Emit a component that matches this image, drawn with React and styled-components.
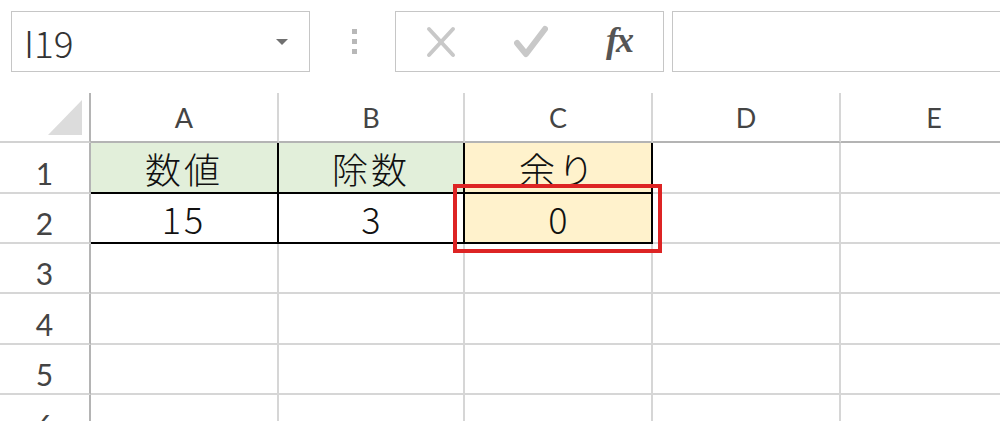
import React from 'react'
import styled, { createGlobalStyle } from 'styled-components'

const GlobalStyle = createGlobalStyle`
  html, body {
    margin: 0;
    padding: 0;
    background: #fff;
    overflow: hidden;
  }
  * {
    box-sizing: border-box;
  }
`

const gridLine = '#d6d6d6'
const headerLine = '#b4b4b4'
const cellFont = `"Noto Sans CJK JP", "Noto Sans", sans-serif`
const headFont = `Lato, "Open Sans", sans-serif`

const Page = styled.div`
  width: 1000px;
  height: 421px;
  overflow: hidden;
`

const Toolbar = styled.div`
  display: flex;
  align-items: center;
  padding: 11px 0 0 11px;
  height: 72px;
`

const NameBox = styled.div`
  display: flex;
  align-items: center;
  width: 299px;
  height: 61px;
  border: 1px solid #c6c6c6;
  padding: 0 21px 0 12px;
  font-family: ${cellFont};
  font-weight: 300;
  font-size: 37px;
  color: #333;
`

const DropArrow = styled.span`
  margin-left: auto;
  width: 0;
  height: 0;
  border-left: 6px solid transparent;
  border-right: 6px solid transparent;
  border-top: 6px solid #707070;
`

const Grip = styled.div`
  display: flex;
  flex-direction: column;
  gap: 5px;
  margin: 0 38px 0 42px;
  span {
    width: 5px;
    height: 5px;
    background: #b8b8b8;
  }
`

const FormulaButtons = styled.div`
  display: flex;
  align-items: center;
  width: 269px;
  height: 61px;
  border: 1px solid #c6c6c6;
  padding-left: 30px;
`

const IconSlot = styled.div`
  display: flex;
  align-items: center;
  justify-content: center;
  width: ${p => p.w}px;
  margin-right: ${p => p.gap}px;
`

const Fx = styled.span`
  font-family: "Liberation Serif", "DejaVu Serif", serif;
  font-style: italic;
  font-weight: bold;
  font-size: 36px;
  color: #555;
  letter-spacing: -2px;
  line-height: 1;
  margin-top: -4px;
`

const FormulaInput = styled.div`
  flex: 1;
  height: 61px;
  margin-left: 8px;
  border: 1px solid #c6c6c6;
  border-right: none;
`

const Sheet = styled.div`
  position: relative;
  margin-top: 21px;
  display: grid;
  grid-template-columns: 91px 188px 186px 188px 188px 188px;
  grid-template-rows: 50px 51px 50px 50px 51px 50px 51px;
`

const Corner = styled.div`
  display: flex;
  align-items: flex-end;
  justify-content: flex-end;
  padding: 0 7px 6px 0;
  border-right: 2px solid ${headerLine};
  border-bottom: 2px solid #d2d2d2;
  span {
    width: 34px;
    height: 35px;
    background: #dcdcdc;
    clip-path: polygon(100% 0, 100% 100%, 0 100%);
  }
`

const ColHeader = styled.div`
  display: flex;
  align-items: flex-end;
  justify-content: center;
  padding-bottom: 7px;
  border-right: 2px solid ${gridLine};
  border-bottom: 2px solid ${headerLine};
  font-family: ${headFont};
  font-size: 27px;
  color: #444;
`

const RowHeader = styled.div`
  display: flex;
  align-items: flex-end;
  justify-content: center;
  padding-bottom: 1px;
  border-right: 2px solid ${headerLine};
  border-bottom: 2px solid ${gridLine};
  font-family: ${headFont};
  font-size: 30px;
  color: #444;
`

const Cell = styled.div`
  display: flex;
  align-items: flex-end;
  justify-content: center;
  padding-bottom: 2px;
  background: ${p => p.fill || '#fff'};
  border-right: 2px solid ${p => (p.boxed ? '#000' : gridLine)};
  border-bottom: 2px solid ${p => (p.boxed ? '#000' : gridLine)};
  font-family: ${cellFont};
  font-weight: 300;
  font-size: 36px;
  line-height: 44px;
  letter-spacing: ${p => (p.wide ? '3px' : '0')};
  color: #111;
`

const Highlight = styled.div`
  position: absolute;
  left: 453px;
  top: 91px;
  width: 209px;
  height: 69px;
  border: 4px solid #dd2424;
  pointer-events: none;
`

const CrossIcon = () => (
  <svg width="30" height="32" viewBox="0 0 30 32">
    <g stroke="#c8c8c8" strokeWidth="4" strokeLinecap="round" fill="none">
      <line x1="3" y1="3" x2="27" y2="29" />
      <line x1="27" y1="3" x2="3" y2="29" />
    </g>
  </svg>
)

const CheckIcon = () => (
  <svg width="34" height="34" viewBox="0 0 34 34">
    <polyline
      points="3,18 12,29 31,4"
      stroke="#c8c8c8"
      strokeWidth="6"
      strokeLinecap="round"
      strokeLinejoin="round"
      fill="none"
    />
  </svg>
)

const GREEN = '#e2efda'
const YELLOW = '#fff2cc'

const columns = ['A', 'B', 'C', 'D', 'E']

const blank = [{}, {}, {}, {}, {}]

const rows = [
  [
    { text: '数値', fill: GREEN, boxed: true, wide: true },
    { text: '除数', fill: GREEN, boxed: true, wide: true },
    { text: '余り', fill: YELLOW, boxed: true, wide: true },
    {},
    {}
  ],
  [
    { text: '15', boxed: true, wide: true },
    { text: '3', boxed: true },
    { text: '0', fill: YELLOW, boxed: true },
    {},
    {}
  ],
  blank,
  blank,
  blank,
  blank
]

export default function App() {
  return (
    <Page>
      <GlobalStyle />
      <Toolbar>
        <NameBox>
          I19
          <DropArrow />
        </NameBox>
        <Grip>
          <span />
          <span />
          <span />
        </Grip>
        <FormulaButtons>
          <IconSlot w={30} gap={58}>
            <CrossIcon />
          </IconSlot>
          <IconSlot w={34} gap={54}>
            <CheckIcon />
          </IconSlot>
          <IconSlot w={34} gap={0}>
            <Fx>fx</Fx>
          </IconSlot>
        </FormulaButtons>
        <FormulaInput />
      </Toolbar>
      <Sheet>
        <Corner>
          <span />
        </Corner>
        {columns.map(c => (
          <ColHeader key={c}>{c}</ColHeader>
        ))}
        {rows.map((row, r) => (
          <React.Fragment key={r}>
            <RowHeader>{r + 1}</RowHeader>
            {row.map((cell, i) => (
              <Cell key={i} fill={cell.fill} boxed={cell.boxed} wide={cell.wide}>
                {cell.text}
              </Cell>
            ))}
          </React.Fragment>
        ))}
        <Highlight />
      </Sheet>
    </Page>
  )
}
